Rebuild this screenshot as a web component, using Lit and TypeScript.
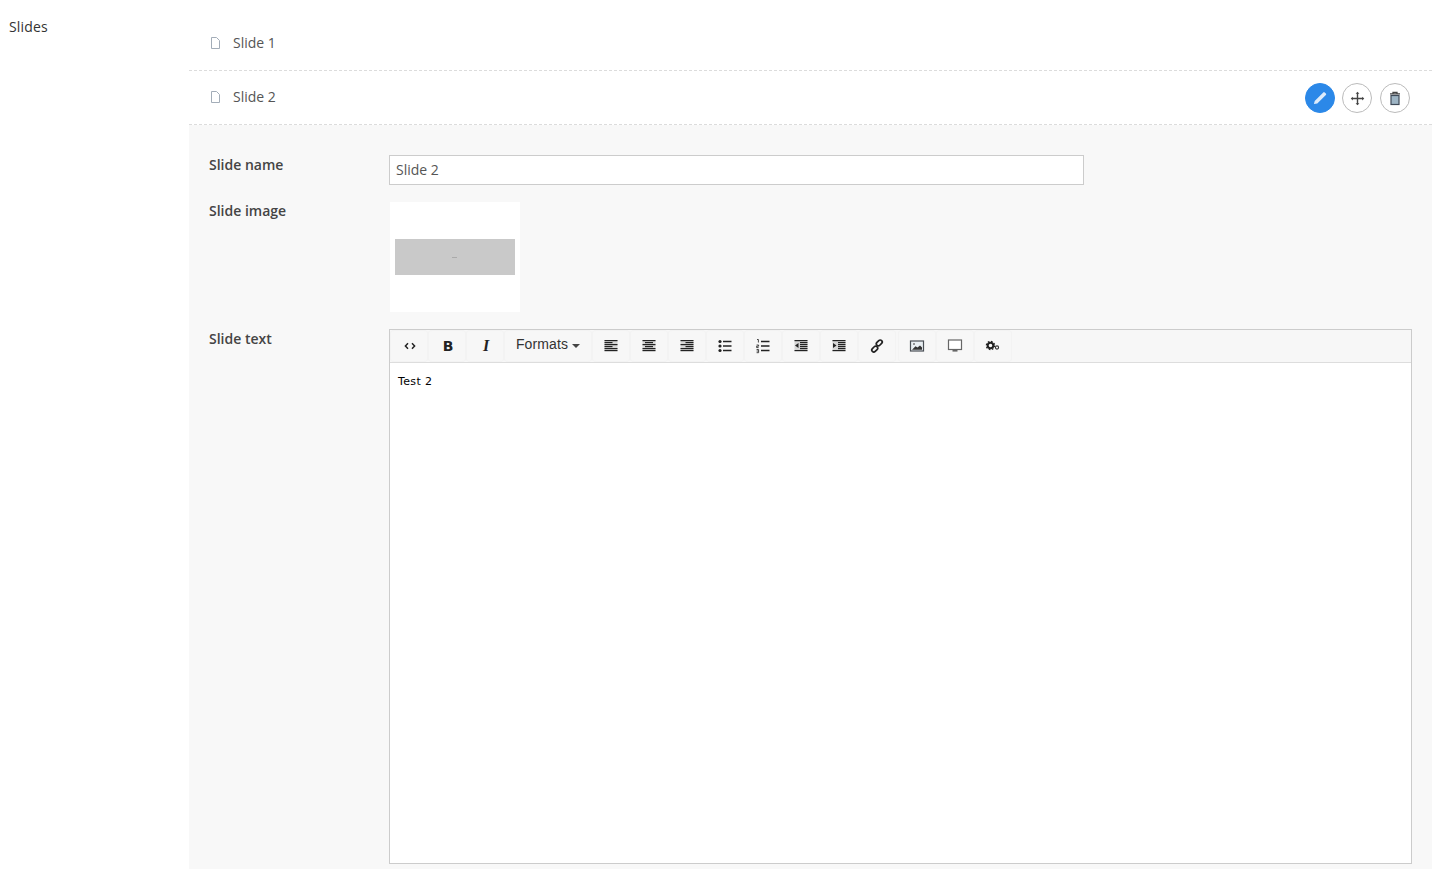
import { LitElement, html, css, svg } from "lit";
import { customElement } from "lit/decorators.js";

const bars = (rows: [number, number][]) =>
  svg`<rect x="1.5" y="2" width="13" height="11" fill="#bbb" opacity=".55"/>${rows.map(([x, w], i) => svg`<rect x=${x} y=${2 + i * 2} width=${w} height="1.2" fill="#222"/>`)}`;

const icons: Record<string, unknown> = {
  code: svg`<path d="M6 5.2 3.4 8 6 10.8M10 5.2 12.6 8 10 10.8" fill="none" stroke="#222" stroke-width="1.5"/>`,
  left: bars([[1.5, 13], [1.5, 8], [1.5, 13], [1.5, 8], [1.5, 13], [1.5, 13]]),
  center: bars([[1.5, 13], [4, 8], [1.5, 13], [4, 8], [1.5, 13], [1.5, 13]]),
  right: bars([[1.5, 13], [6.5, 8], [1.5, 13], [6.5, 8], [1.5, 13], [1.5, 13]]),
  ul: svg`<circle cx="3" cy="3.5" r="1.6" fill="#222"/><circle cx="3" cy="8" r="1.6" fill="#222"/><circle cx="3" cy="12.5" r="1.6" fill="#222"/><path d="M6 3.5h8.5M6 8h8.5M6 12.5h8.5" stroke="#222" stroke-width="1.4"/>`,
  ol: svg`<path d="M2 1.5h1.4v3M1.6 7h2v1.2h-2v1.4h2M1.6 11.5h2v3.2h-2M1.6 13h2" fill="none" stroke="#333" stroke-width=".9"/><path d="M6 3.5h8.5M6 8h8.5M6 12.5h8.5" stroke="#222" stroke-width="1.4"/>`,
  outdent: svg`${bars([[1.5, 13], [7, 7.5], [7, 7.5], [7, 7.5], [7, 7.5], [1.5, 13]])}<path d="M5.5 5v5L2 7.5z" fill="#222"/>`,
  indent: svg`${bars([[1.5, 13], [7, 7.5], [7, 7.5], [7, 7.5], [7, 7.5], [1.5, 13]])}<path d="M2 5v5L5.5 7.5z" fill="#222"/>`,
  link: svg`<g fill="none" stroke="#222" stroke-width="1.7"><rect x="8.2" y="1.6" width="4" height="6.6" rx="2" transform="rotate(45 10.2 5)"/><rect x="3.8" y="7.8" width="4" height="6.6" rx="2" transform="rotate(45 5.8 11)"/></g>`,
  image: svg`<rect x="1.5" y="3" width="13" height="10" fill="#e8eef2" stroke="#4a4f55" stroke-width="1.2"/><path d="M3 11.7 6.5 8.2l2 1.4L11 7.4l2 2v2.3z" fill="#333"/><circle cx="5" cy="6" r="1" fill="#777"/>`,
  media: svg`<rect x="1.5" y="2" width="13" height="9.5" fill="#fff" stroke="#666" stroke-width="1.2"/><rect x="5.5" y="12" width="5" height="1.6" fill="#666"/>`,
  gears: svg`<circle cx="5.5" cy="7.5" r="2.8" fill="none" stroke="#222" stroke-width="2"/><circle cx="5.5" cy="7.5" r="4.1" fill="none" stroke="#222" stroke-width="1.3" stroke-dasharray="1.61 1.61"/><circle cx="12" cy="9.5" r="1.6" fill="none" stroke="#333" stroke-width="1.1"/>`,
};

const doc = svg`<svg class="doc" viewBox="0 0 9 12" width="9" height="12"><path d="M.5.5h5l3 3v8h-8z" fill="#fff" stroke="#a3adb8"/></svg>`;

@customElement("app-root")
export class AppRoot extends LitElement {
  static styles = css`
    :host { display: block; height: 869px; overflow: hidden; background: #fff; font: 14px/20px "Open Sans", sans-serif; color: #333; }
    .page { display: flex; height: 869px; padding-right: 6px; box-sizing: border-box; }
    .title { width: 180px; flex: none; padding: 17px 0 0 9px; color: #333; letter-spacing: .15px; }
    .main { flex: 1; min-width: 0; display: flex; flex-direction: column; }
    .row { display: flex; align-items: center; height: 54px; padding: 0 0 2px 22px; border-bottom: 1px dashed #dcdcdc; box-sizing: border-box; color: #555; }
    .row.first { height: 55px; margin-top: 16px; padding-bottom: 0; }
    .row .doc { margin: 0 13px 0 0; flex: none; }
    .row .name { flex: 1; }
    .actions { display: flex; gap: 7px; margin-right: 22px; margin-top: 3px; }
    .circle { width: 30px; height: 30px; border-radius: 50%; border: 1px solid #bbb; box-sizing: border-box; display: flex; align-items: center; justify-content: center; background: #fff; }
    .circle.primary { background: #2b88e8; border-color: #2b88e8; }
    .circle.last { margin-left: 1px; }
    .panel { flex: 1; background: #f8f8f8; padding: 30px 20px 5px; display: flex; flex-direction: column; min-height: 0; }
    .field { display: flex; }
    .label { width: 180px; flex: none; color: #444; font-weight: 600; line-height: 20px; }
    .input { width: 695px; height: 30px; box-sizing: border-box; border: 1px solid #ccc; background: #fff; padding: 0 6px; line-height: 28px; color: #555; }
    .f-image { margin-top: 17px; }
    .f-image .label { margin-top: -1px; }
    .thumb { width: 130px; height: 110px; margin-left: 1px; background: #fff; display: flex; align-items: center; justify-content: center; }
    .thumb div { width: 120px; height: 36px; background: #c9c9c9; display: flex; align-items: center; justify-content: center; }
    .thumb i { width: 5px; height: 1px; margin-right: 2px; background: #aaa; }
    .f-text { margin-top: 17px; flex: 1; min-height: 0; }
    .editor { flex: 1; min-width: 0; display: flex; flex-direction: column; border: 1px solid #ccc; background: #fff; }
    .toolbar { display: flex; align-items: center; height: 32px; border-bottom: 1px solid #ddd; background: #f7f7f7; padding-left: 1px; gap: 2px; box-sizing: content-box; }
    .btn { width: 36px; height: 30px; border-radius: 3px; background: #f7f7f7; box-shadow: 0 0 0 1px #f3f3f3; display: flex; align-items: center; justify-content: center; flex: none; color: #222; }
    .btn.nudge { padding-left: 2px; box-sizing: border-box; }
    .btn.wide { width: 86px; font: 14px/20px "Liberation Sans", Arial, sans-serif; letter-spacing: .1px; padding: 0 0 4px 0; box-sizing: border-box; gap: 4px; color: #333; }
    .btn.gap { margin-left: 2px; }
    .caret { width: 0; height: 0; border: 4px solid transparent; border-top-color: #444; border-bottom: 0; margin-top: 4px; }
    .b { font: bold 14px/1 "DejaVu Sans", sans-serif; }
    .em { font: italic bold 16px/1 "Liberation Serif", serif; }
    .body { flex: 1; padding: 11px 8px; font: 11px/16px "DejaVu Sans", Verdana, sans-serif; letter-spacing: .35px; color: #000; }
  `;

  render() {
    const btn = (n: string, cls = "") =>
      html`<div class="btn ${cls}"><svg viewBox="0 0 16 16" width="16" height="16">${icons[n]}</svg></div>`;
    return html`
      <div class="page">
        <div class="title">Slides</div>
        <div class="main">
          <div class="row first">${doc}<span class="name">Slide 1</span></div>
          <div class="row">${doc}<span class="name">Slide 2</span>
            <div class="actions">
              <div class="circle primary"><svg viewBox="0 0 16 16" width="18" height="18"><path d="M2.6 13.4l.7-2.8 7.6-7.6a.9.9 0 0 1 1.3 0l1 1a.9.9 0 0 1 0 1.3l-7.6 7.6z" fill="#dcebfb"/></svg></div>
              <div class="circle"><svg viewBox="0 0 16 16" width="15" height="15"><path d="M8 2v12M2 8h12" stroke="#444" stroke-width="1.5"/><path d="M8 .8 10 3H6zM8 15.2 6 13h4zM.8 8 3 6v4zM15.2 8 13 10V6z" fill="#444"/></svg></div>
              <div class="circle last"><svg viewBox="0 0 16 16" width="16" height="16"><path d="M3 3.8h10M6 3.8V2.3h4v1.5" fill="none" stroke="#444" stroke-width="1.3"/><rect x="4" y="5.5" width="8" height="9" fill="#9db4c4" stroke="#3f4a58" stroke-width="1.2"/></svg></div>
            </div>
          </div>
          <div class="panel">
            <div class="field f-name"><div class="label">Slide name</div><div class="input">Slide 2</div></div>
            <div class="field f-image"><div class="label">Slide image</div><div class="thumb"><div><i></i></div></div></div>
            <div class="field f-text"><div class="label">Slide text</div>
              <div class="editor">
                <div class="toolbar">
                  ${btn("code", "nudge")}
                  <div class="btn nudge"><span class="b">B</span></div>
                  <div class="btn nudge"><span class="em">I</span></div>
                  <div class="btn wide">Formats<span class="caret"></span></div>
                  ${btn("left")}${btn("center")}${btn("right")}${btn("ul")}${btn("ol")}${btn("outdent")}${btn("indent")}${btn("link")}
                  ${btn("image", "gap")}${btn("media")}${btn("gears")}
                </div>
                <div class="body">Test 2</div>
              </div>
            </div>
          </div>
        </div>
      </div>
    `;
  }
}
